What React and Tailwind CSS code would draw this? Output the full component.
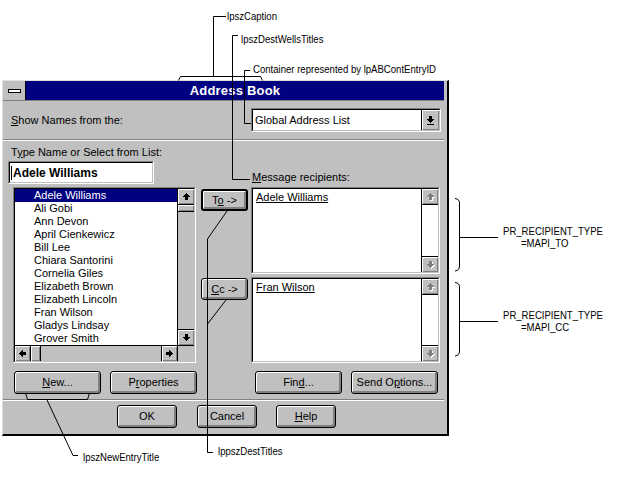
import React from "react";

const SANS = "font-['Liberation_Sans',Arial,sans-serif]";

const UP = [
  [3, 0, 1],
  [2, 1, 3],
  [1, 2, 5],
  [0, 3, 7],
  [2, 4, 3],
  [2, 5, 3],
  [2, 6, 3],
];

function ArrowIcon({ dir, disabled }) {
  const rot = { up: 0, down: 180, left: -90, right: 90 }[dir];
  const rects = UP.map(([x, y, w], i) => <rect key={i} x={x} y={y} width={w} height={1} />);
  return (
    <svg width="7" height="7" viewBox="0 0 7 7" shapeRendering="crispEdges" overflow="visible">
      {disabled && (
        <g transform={`translate(1 1) rotate(${rot} 3.5 3.5)`} fill="#fff">
          {rects}
        </g>
      )}
      <g transform={`rotate(${rot} 3.5 3.5)`} fill={disabled ? "#808080" : "#000"}>
        {rects}
      </g>
    </svg>
  );
}

function ComboArrow() {
  const rows = [
    [2, 0, 3],
    [2, 1, 3],
    [2, 2, 3],
    [0, 3, 7],
    [1, 4, 5],
    [2, 5, 3],
    [3, 6, 1],
    [0, 8, 7],
  ];
  return (
    <svg width="7" height="9" viewBox="0 0 7 9" shapeRendering="crispEdges">
      {rows.map(([x, y, w], i) => (
        <rect key={i} x={x} y={y} width={w} height={1} fill="#000" />
      ))}
    </svg>
  );
}

function Bevel({ className, children }) {
  return (
    <div
      className={`${className} flex items-center justify-center bg-[#c0c0c0] shadow-[inset_1px_1px_0_#fff,inset_-1px_-1px_0_#808080]`}
    >
      {children}
    </div>
  );
}

function Btn({ className, def, children }) {
  return (
    <div
      className={`${className} ${
        def ? "border-2" : "border"
      } flex items-center justify-center rounded-[3px] border-black bg-[#c0c0c0] text-[11px] text-black shadow-[inset_1px_1px_0_#fff,inset_-1px_-1px_0_#808080,inset_-2px_-2px_0_#808080]`}
    >
      <span className="leading-none">{children}</span>
    </div>
  );
}

function Sunken({ className, children }) {
  return (
    <div className={`${className} border border-t-[#808080] border-l-[#808080] border-b-white border-r-white`}>
      <div className="flex h-full w-full border border-t-black border-l-black border-b-[#c0c0c0] border-r-[#c0c0c0] bg-white">
        {children}
      </div>
    </div>
  );
}

const NAMES = [
  "Adele Williams",
  "Ali Gobi",
  "Ann Devon",
  "April Cienkewicz",
  "Bill Lee",
  "Chiara Santorini",
  "Cornelia Giles",
  "Elizabeth Brown",
  "Elizabeth Lincoln",
  "Fran Wilson",
  "Gladys Lindsay",
  "Grover Smith",
];

function RecipientBox({ className, name }) {
  return (
    <Sunken className={className}>
      <div className="flex-1 pl-[3px] pt-[2px] text-[11px] leading-[13px]">
        <span className="underline">{name}</span>
      </div>
      <div className="flex w-[17px] flex-col border-l border-black bg-white">
        <Bevel className="h-[16px] border-b border-black">
          <ArrowIcon dir="up" disabled />
        </Bevel>
        <div className="flex-1" />
        <Bevel className="h-[16px] border-t border-black">
          <ArrowIcon dir="down" disabled />
        </Bevel>
      </div>
    </Sunken>
  );
}

function Note({ className, children }) {
  return (
    <div
      className={`${className} absolute origin-left scale-x-[0.87] whitespace-nowrap text-[11px] leading-[13px] text-black`}
    >
      {children}
    </div>
  );
}

export default function App() {
  return (
    <div className={`relative h-[478px] w-[619px] overflow-hidden bg-white pt-[80px] text-black ${SANS}`}>
      {/* Dialog */}
      <div className="ml-[2px] flex h-[356px] w-[447px] flex-col border-l border-t border-[#dfdfdf] border-r-2 border-b-2 border-r-black border-b-black bg-[#c0c0c0]">
        {/* Title bar */}
        <div className="mr-[3px] flex h-[20px] border-b border-[#808080]">
          <div className="flex w-[23px] items-center justify-center border-r border-black bg-[#c0c0c0]">
            <div className="h-[4px] w-[13px] border border-black bg-white" />
          </div>
          <div className="flex flex-1 items-center justify-center bg-[#000080] text-[13px] font-bold tracking-[0.2px] text-white">
            Address Book
          </div>
        </div>

        {/* Show names row */}
        <div className="flex h-[38px] items-center">
          <div className="w-[248px] pl-[8px] text-[11px]">
            <span className="underline">S</span>how Names from the:
          </div>
          <Sunken className="h-[24px] w-[190px]">
            <div className="flex flex-1 items-center pl-[2px] text-[11px]">Global Address List</div>
            <Bevel className="w-[18px] border-l border-black">
              <ComboArrow />
            </Bevel>
          </Sunken>
        </div>

        <div className="mr-[3px] h-[2px] border-t border-b border-t-[#808080] border-b-white" />

        {/* Main area */}
        <div className="flex h-[258px]">
          {/* Left column */}
          <div className="ml-[5px] flex w-[189px] flex-col pt-[4px]">
            <div className="h-[15px] pl-[3px] text-[11px] leading-[15px]">
              T<span className="underline">y</span>pe Name or Select from List:
            </div>
            <Sunken className="mt-[1px] h-[23px] w-[146px]">
              <div className="flex items-center">
                <div className="ml-[1px] h-[14px] w-[1px] bg-black" />
                <span className="ml-[1px] text-[12px] font-bold">Adele Williams</span>
              </div>
            </Sunken>
            <Sunken className="ml-[5px] mt-[3px] h-[176px] w-[183px]">
              <div className="flex flex-1 flex-col">
                <div className="flex h-[156px]">
                  <div className="flex-1 overflow-hidden">
                    {NAMES.map((n, i) => (
                      <div
                        key={n}
                        className={`h-[13px] whitespace-nowrap pl-[19px] text-[11px] leading-[13px] ${
                          i === 0 ? "bg-[#000080] text-white" : ""
                        }`}
                      >
                        {n}
                      </div>
                    ))}
                  </div>
                  <div className="flex w-[17px] flex-col border-l border-black bg-[#c0c0c0]">
                    <Bevel className="h-[16px] border-b border-black">
                      <ArrowIcon dir="up" />
                    </Bevel>
                    <Bevel className="h-[7px] border-b border-black" />
                    <div className="flex-1" />
                    <Bevel className="h-[16px] border-t border-black">
                      <ArrowIcon dir="down" />
                    </Bevel>
                  </div>
                </div>
                <div className="flex h-[16px] border-t border-black bg-[#c0c0c0]">
                  <Bevel className="w-[16px] border-r border-black">
                    <ArrowIcon dir="left" />
                  </Bevel>
                  <Bevel className="w-[10px] border-r border-black" />
                  <div className="flex-1" />
                  <Bevel className="w-[16px] border-l border-black">
                    <ArrowIcon dir="right" />
                  </Bevel>
                  <div className="w-[17px] border-l border-black bg-[#c0c0c0]" />
                </div>
              </div>
            </Sunken>
            <div className="mt-[8px] flex">
              <Btn className="ml-[6px] h-[23px] w-[87px]">
                <span className="underline">N</span>ew...
              </Btn>
              <Btn className="ml-[9px] h-[23px] w-[87px]">
                P<span className="underline">r</span>operties
              </Btn>
            </div>
          </div>

          {/* Middle column */}
          <div className="ml-[4px] flex w-[47px] flex-col">
            <Btn def className="mt-[48px] h-[22px] w-[47px]">
              T<span className="underline">o</span> -&gt;
            </Btn>
            <Btn className="mt-[67px] h-[22px] w-[47px]">
              <span className="underline">C</span>c -&gt;
            </Btn>
          </div>

          {/* Right column */}
          <div className="ml-[3px] flex w-[189px] flex-col">
            <div className="mt-[29px] h-[14px] pl-[1px] text-[11px] leading-[14px]">
              <span className="underline">M</span>essage recipients:
            </div>
            <RecipientBox className="mt-[3px] h-[87px] w-[189px]" name="Adele Williams" />
            <RecipientBox className="mt-[3px] h-[86px] w-[189px]" name="Fran Wilson" />
            <div className="mt-[8px] flex">
              <Btn className="ml-[4px] h-[23px] w-[87px]">
                Fin<span className="underline">d</span>...
              </Btn>
              <Btn className="ml-[9px] h-[23px] w-[87px]">
                Send O<span className="underline">p</span>tions...
              </Btn>
            </div>
          </div>
        </div>

        <div className="mr-[3px] h-[2px] border-t border-b border-t-[#808080] border-b-white" />

        {/* Bottom buttons */}
        <div className="mt-[4px] flex pl-[114px]">
          <Btn className="h-[23px] w-[60px]">OK</Btn>
          <Btn className="ml-[20px] h-[23px] w-[60px]">Cancel</Btn>
          <Btn className="ml-[19px] h-[23px] w-[60px]">
            <span className="underline">H</span>elp
          </Btn>
        </div>
      </div>

      {/* Annotation lines */}
      <svg
        className="pointer-events-none absolute left-0 top-0"
        width="619"
        height="478"
        viewBox="0 0 619 478"
        fill="none"
        stroke="#000"
        strokeWidth="1"
      >
        <path d="M226 16.5H213.5V76" />
        <path d="M178.5 80.5L180.5 76.5H260.5L262.5 80.5" />
        <path d="M238 35.5H232.5V179.5H250" />
        <path d="M250 70.5H244.5V123.5H251" />
        <path d="M227 211L207.5 239V452.5H213" />
        <path d="M226 300L207.5 324" />
        <path d="M25.5 393L27.5 399.5H87.5L89.5 393" />
        <path d="M47 400L73 455.5H78" />
        <path d="M455 198.5Q459.5 199 459.5 203V266Q459.5 270.5 455 271" />
        <path d="M459.5 237.5H498" />
        <path d="M455 282.5Q459.5 283 459.5 287V351Q459.5 355.5 455 356" />
        <path d="M459.5 321.5H498" />
      </svg>

      {/* Annotation labels */}
      <Note className="left-[227px] top-[10px]">lpszCaption</Note>
      <Note className="left-[241px] top-[33px]">lpszDestWellsTitles</Note>
      <Note className="left-[253px] top-[63px]">Container represented by lpABContEntryID</Note>
      <Note className="left-[83px] top-[451px]">lpszNewEntryTitle</Note>
      <Note className="left-[218px] top-[445px]">lppszDestTitles</Note>
      <Note className="left-[503px] top-[225px]">PR_RECIPIENT_TYPE</Note>
      <Note className="left-[521px] top-[237px]">=MAPI_TO</Note>
      <Note className="left-[503px] top-[309px]">PR_RECIPIENT_TYPE</Note>
      <Note className="left-[521px] top-[321px]">=MAPI_CC</Note>
    </div>
  );
}
